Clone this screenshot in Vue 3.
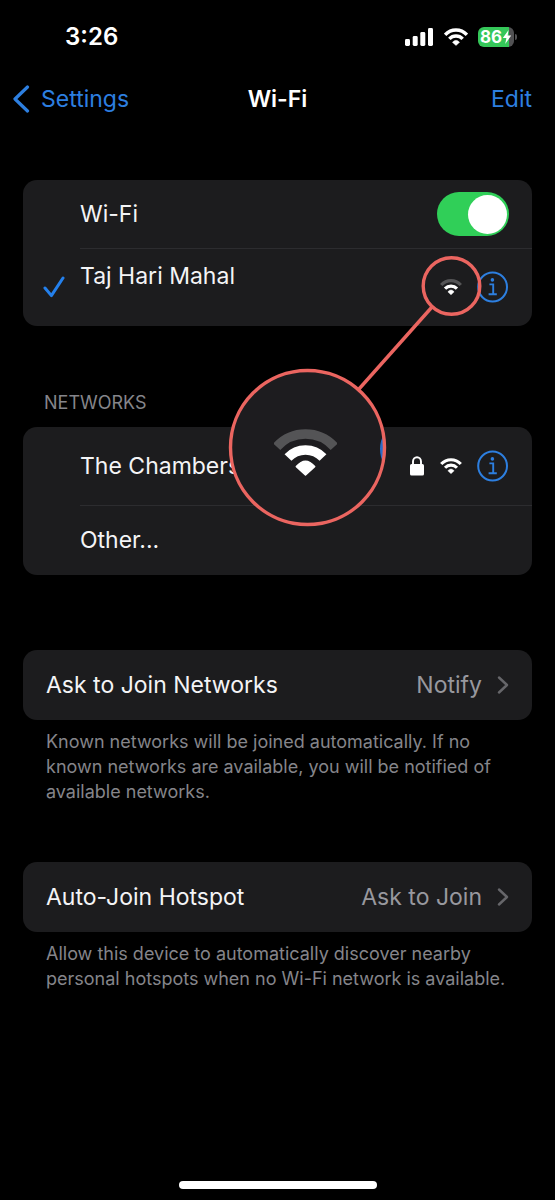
<script setup>
import { ref } from 'vue'

const wifiOn = ref(true)
const options = [
  {
    title: 'Ask to Join Networks',
    value: 'Notify',
    note: 'Known networks will be joined automatically. If no known networks are available, you will be notified of available networks.',
  },
  {
    title: 'Auto-Join Hotspot',
    value: 'Ask to Join',
    note: 'Allow this device to automatically discover nearby personal hotspots when no Wi-Fi network is available.',
  },
]
</script>

<template>
  <div class="screen">
    <svg class="symbols" aria-hidden="true">
      <symbol id="wifi" viewBox="0 0 63 47">
        <g fill="none" stroke="currentColor" stroke-width="9">
          <path d="M2.8 17.7A38.7 38.7 0 0 1 60.2 17.7" />
          <path d="M14 28.5A24.2 24.2 0 0 1 49 28.5" />
        </g>
        <path d="M31.5 46L22 37.6Q31.5 26.5 41 37.6Z" fill="currentColor" stroke="currentColor" stroke-width="1" stroke-linejoin="round" />
      </symbol>
      <symbol id="wifi-weak" viewBox="0 0 63 47">
        <g fill="none" stroke="currentColor" stroke-width="9.5">
          <path d="M2.8 17.7A38.7 38.7 0 0 1 60.2 17.7" stroke="#545456" />
          <path d="M14 28.5A24.2 24.2 0 0 1 49 28.5" />
        </g>
        <path d="M31.5 46L22.4 37.6Q31.5 27 40.6 37.6Z" fill="currentColor" stroke="currentColor" stroke-width="1.6" stroke-linejoin="round" />
      </symbol>
      <symbol id="info" viewBox="0 0 32 32">
        <circle cx="15.6" cy="16" r="14.4" fill="none" stroke="currentColor" stroke-width="2" />
        <circle cx="15.4" cy="8.9" r="1.8" fill="currentColor" />
        <path d="M12.4 13.4H16.2V23M11.6 23.2H19.8" fill="none" stroke="currentColor" stroke-width="1.9" />
      </symbol>
    </svg>

    <div class="status">
      <span class="time">3:26</span>
      <div class="indicators">
        <svg class="signal" viewBox="0 0 28 18" fill="#fff" aria-hidden="true">
          <rect x="0" y="11" width="5" height="7" rx="1.4" />
          <rect x="7.7" y="8" width="5" height="10" rx="1.4" />
          <rect x="15.3" y="4" width="5" height="14" rx="1.4" />
          <rect x="23" y="0" width="5" height="18" rx="1.4" />
        </svg>
        <svg class="status-wifi" aria-hidden="true"><use href="#wifi" /></svg>
        <div class="battery">
          <span>86</span>
          <svg viewBox="0 0 10 14" aria-hidden="true"><path d="M6.6 0L0.8 8H4.4L3.2 14L9.2 5.6H5.6Z" fill="#fff" /></svg>
        </div>
      </div>
    </div>

    <header class="nav">
      <a class="back" href="#settings">
        <svg viewBox="0 0 18 28" aria-hidden="true"><path d="M15.5 2L3 14L15.5 26" fill="none" stroke="currentColor" stroke-width="3.2" stroke-linecap="round" stroke-linejoin="round" /></svg>
        Settings
      </a>
      <h1>Wi-Fi</h1>
      <button class="edit" type="button">Edit</button>
    </header>

    <main>
      <section class="card">
        <div class="row wifi-row">
          <label class="label" for="wifi-toggle">Wi-Fi</label>
          <input id="wifi-toggle" v-model="wifiOn" class="toggle" type="checkbox" role="switch" />
        </div>
        <div class="row divided current-row">
          <svg class="check" viewBox="0 0 22 22" aria-hidden="true"><path d="M2 12L8.4 19.6L20 2" fill="none" stroke="currentColor" stroke-width="3" stroke-linecap="round" stroke-linejoin="round" /></svg>
          <span class="label raised">Taj Hari Mahal</span>
          <svg class="wifi" aria-hidden="true"><use href="#wifi-weak" /></svg>
          <button class="info" type="button" aria-label="Network details"><svg aria-hidden="true"><use href="#info" /></svg></button>
        </div>
      </section>

      <h2>NETWORKS</h2>
      <section class="card">
        <div class="row network-row">
          <span class="label">The Chambers</span>
          <svg class="lock" viewBox="0 0 14 20" aria-hidden="true">
            <rect x="0" y="8" width="14" height="11.5" rx="1.6" fill="#fff" />
            <path d="M3 9V5.5A4 4.3 0 0 1 11 5.5V9" fill="none" stroke="#fff" stroke-width="1.9" />
          </svg>
          <svg class="wifi" aria-hidden="true"><use href="#wifi" /></svg>
          <button class="info" type="button" aria-label="Network details"><svg aria-hidden="true"><use href="#info" /></svg></button>
        </div>
        <div class="row divided">
          <span class="label">Other...</span>
        </div>
      </section>

      <section v-for="option in options" :key="option.title" class="option">
        <button class="card option-row" type="button">
          <span>{{ option.title }}</span>
          <span class="value">{{ option.value }}</span>
          <svg class="chevron" viewBox="0 0 12 18" aria-hidden="true"><path d="M2 1.5L10 9L2 16.5" fill="none" stroke="currentColor" stroke-width="2.4" stroke-linecap="round" stroke-linejoin="round" /></svg>
        </button>
        <p>{{ option.note }}</p>
      </section>

      <svg class="callout" viewBox="0 0 260 280" aria-hidden="true">
        <defs><clipPath id="lens"><circle cx="82" cy="192" r="77" /></clipPath></defs>
        <circle cx="82" cy="192" r="77" fill="#1d1c1f" />
        <circle cx="185" cy="194" r="28" fill="none" stroke="#2b6cc8" stroke-width="4" clip-path="url(#lens)" />
        <g fill="none" stroke="#eb6560" stroke-width="3.4">
          <path d="M207 52L134 134" />
          <circle cx="226.5" cy="31" r="28.3" />
          <circle cx="82.5" cy="192.5" r="77" />
        </g>
        <use href="#wifi-weak" x="49" y="174" width="63" height="47" color="#fff" />
      </svg>
    </main>

    <div class="home-bar"></div>
  </div>
</template>

<style>
html,
body {
  background: #000;
}
</style>

<style scoped>
.screen {
  display: flex;
  flex-direction: column;
  min-height: 100vh;
  box-sizing: border-box;
  background: #000;
  color: #f4f4f6;
  font-family: Inter, "Liberation Sans", sans-serif;
  font-size: 23px;
  line-height: 30px;
}
.symbols {
  position: absolute;
  width: 0;
  height: 0;
}
button {
  padding: 0;
  border: 0;
  background: none;
  color: inherit;
  font: inherit;
}
svg {
  display: block;
  flex: none;
}
.status {
  display: flex;
  align-items: center;
  justify-content: space-between;
  height: 74px;
  padding: 0 38px 0 65px;
  color: #fff;
}
.time {
  font-size: 24px;
  font-weight: 600;
}
.indicators {
  display: flex;
  align-items: center;
}
.signal {
  width: 28px;
  height: 18px;
  margin-right: 11px;
}
.status-wifi {
  width: 24px;
  height: 18px;
  margin-right: 10px;
}
.battery {
  position: relative;
  display: flex;
  align-items: center;
  justify-content: center;
  width: 36px;
  height: 20px;
  margin-right: 3px;
  border-radius: 6px;
  background: linear-gradient(90deg, #35c759 86%, #515153 86%);
  font-size: 17px;
  font-weight: 700;
  line-height: 20px;
}
.battery::after {
  content: "";
  position: absolute;
  right: -3px;
  width: 2px;
  height: 6px;
  border-radius: 0 2px 2px 0;
  background: #515153;
}
.battery svg {
  width: 10px;
  height: 14px;
}
.nav {
  display: grid;
  grid-template-columns: 1fr auto 1fr;
  align-items: center;
  height: 50px;
  padding: 0 12px;
  margin-bottom: 56px;
}
.back {
  display: flex;
  align-items: center;
  gap: 11px;
  color: #2d7fe0;
  text-decoration: none;
}
.back svg {
  width: 18px;
  height: 28px;
}
h1 {
  margin: 0;
  color: #fff;
  font-size: 23px;
  font-weight: 600;
}
.edit {
  justify-self: end;
  margin-right: 11px;
  color: #2d7fe0;
}
main {
  position: relative;
  padding: 0 23px;
}
.card {
  border-radius: 14px;
  background: #1c1c1e;
}
.row {
  position: relative;
  display: flex;
  align-items: center;
  height: 70px;
  padding: 0 23px 0 57px;
}
.divided::before {
  content: "";
  position: absolute;
  top: 0;
  right: 0;
  left: 57px;
  height: 1px;
  background: #2c2c2f;
}
.wifi-row {
  height: 68px;
}
.current-row,
.network-row {
  height: 78px;
}
.label {
  flex: 1;
}
.raised {
  padding-bottom: 22px;
}
.current-row {
  padding-left: 20px;
}
.check {
  width: 22px;
  height: 22px;
  margin-right: 15px;
  color: #2480ec;
}
.toggle {
  display: flex;
  align-items: center;
  width: 72px;
  height: 44px;
  margin: 0;
  padding: 0 2px;
  box-sizing: border-box;
  border-radius: 22px;
  background: #39393d;
  appearance: none;
}
.toggle::before {
  content: "";
  width: 39px;
  height: 39px;
  border-radius: 50%;
  background: #fff;
}
.toggle:checked {
  justify-content: flex-end;
  background: #30cf58;
}
.wifi {
  width: 22px;
  height: 16px;
  margin-right: 15px;
  color: #fff;
}
.lock {
  width: 14px;
  height: 20px;
  margin-right: 16px;
}
.info {
  color: #2d7fe0;
}
.info svg {
  width: 32px;
  height: 32px;
}
h2 {
  margin: 66px 21px 13px;
  color: #85858a;
  font-size: 18px;
  font-weight: 400;
  line-height: 22px;
}
.option {
  margin-top: 75px;
}
.option + .option {
  margin-top: 58px;
}
.option-row {
  display: flex;
  align-items: center;
  width: 100%;
  height: 70px;
  padding: 0 23px;
  text-align: left;
}
.value {
  margin-left: auto;
  color: #98989e;
}
.chevron {
  width: 12px;
  height: 18px;
  margin-left: 15px;
  color: #66666a;
}
p {
  margin: 9px 16px 0 23px;
  color: #85858a;
  font-size: 18px;
  line-height: 25px;
}
.callout {
  position: absolute;
  top: 75px;
  right: 70px;
  width: 260px;
  height: 280px;
  pointer-events: none;
}
.home-bar {
  width: 198px;
  height: 8px;
  margin: auto auto 11px;
  border-radius: 4px;
  background: #fff;
}
</style>
